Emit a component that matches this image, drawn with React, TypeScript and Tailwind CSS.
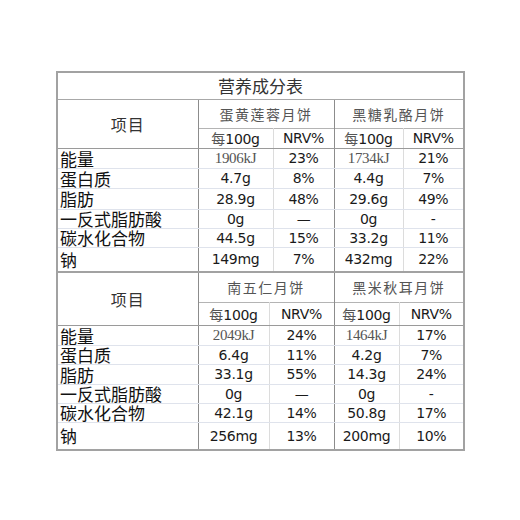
import type { ReactNode } from "react";

const cjk = "font-['Noto_Sans_CJK_SC',sans-serif]";
const num = "font-['DejaVu_Sans',sans-serif] text-[14px] text-[#1a1a1a] tracking-[-0.3px]";
const serifNum = "font-['Liberation_Serif',serif] text-[15px] text-[#555]";

type Row = {
	label: string;
	h: string;
	a: ReactNode;
	b: ReactNode;
	c: ReactNode;
	d: ReactNode;
	last?: boolean;
};

const top: Row[] = [
	{ label: "能量", h: "h-[20px]", a: <span className={serifNum}>1906kJ</span>, b: "23%", c: <span className={serifNum}>1734kJ</span>, d: "21%" },
	{ label: "蛋白质", h: "h-[20px]", a: "4.7g", b: "8%", c: "4.4g", d: "7%" },
	{ label: "脂肪", h: "h-[21px]", a: "28.9g", b: "48%", c: "29.6g", d: "49%" },
	{ label: "一反式脂肪酸", h: "h-[19px]", a: "0g", b: "—", c: "0g", d: "-" },
	{ label: "碳水化合物", h: "h-[19px]", a: "44.5g", b: "15%", c: "33.2g", d: "11%" },
	{ label: "钠", h: "h-[24px]", a: "149mg", b: "7%", c: "432mg", d: "22%", last: true },
];

const bottom: Row[] = [
	{ label: "能量", h: "h-[20px]", a: <span className={serifNum}>2049kJ</span>, b: "24%", c: <span className={serifNum}>1464kJ</span>, d: "17%" },
	{ label: "蛋白质", h: "h-[19px]", a: "6.4g", b: "11%", c: "4.2g", d: "7%" },
	{ label: "脂肪", h: "h-[20px]", a: "33.1g", b: "55%", c: "14.3g", d: "24%" },
	{ label: "一反式脂肪酸", h: "h-[19px]", a: "0g", b: "—", c: "0g", d: "-" },
	{ label: "碳水化合物", h: "h-[19px]", a: "42.1g", b: "14%", c: "50.8g", d: "17%" },
	{ label: "钠", h: "h-[27px]", a: "256mg", b: "13%", c: "200mg", d: "10%", last: true },
];

function BodyRows({ rows }: { rows: Row[] }) {
	return (
		<>
			{rows.map((r) => {
				const line = r.last ? "" : "border-b border-[#dfe3ec]";
				return (
					<tr key={r.label} className={r.h}>
						<td className={`${line} border-r border-r-[#8c8c8c] pl-[2px] p-0 text-left text-[17px] leading-none text-[#111] ${cjk}`}>
							{r.label}
						</td>
						<td className={`${line} border-r border-r-[#dcdcdc] p-0 text-center leading-none ${num}`}>{r.a}</td>
						<td className={`${line} border-r border-r-[#8c8c8c] p-0 text-center leading-none ${num}`}>{r.b}</td>
						<td className={`${line} border-r border-r-[#dcdcdc] p-0 text-center leading-none ${num}`}>{r.c}</td>
						<td className={`${line} p-0 text-center leading-none ${num}`}>{r.d}</td>
					</tr>
				);
			})}
		</>
	);
}

function PerHead({ h }: { h: string }) {
	return (
		<tr className={h}>
			<td className="border-t border-t-[#b4b4b4] border-r border-r-[#dcdcdc] border-b border-b-[#9a9a9a] p-0 text-center leading-none">
				<span className={`${cjk} text-[14px] text-[#555]`}>每</span>
				<span className={num}>100g</span>
			</td>
			<td className={`border-t border-t-[#b4b4b4] border-r border-r-[#8c8c8c] border-b border-b-[#9a9a9a] p-0 text-center leading-none ${num}`}>NRV%</td>
			<td className="border-t border-t-[#b4b4b4] border-r border-r-[#dcdcdc] border-b border-b-[#9a9a9a] p-0 text-center leading-none">
				<span className={`${cjk} text-[14px] text-[#555]`}>每</span>
				<span className={num}>100g</span>
			</td>
			<td className={`border-t border-t-[#b4b4b4] border-b border-b-[#9a9a9a] p-0 text-center leading-none ${num}`}>NRV%</td>
		</tr>
	);
}

function Section({
	cols,
	names,
	title,
	rows,
	prodH,
	perH,
	itemTop,
}: {
	cols: number[];
	names: [string, string];
	title?: string;
	rows: Row[];
	prodH: string;
	perH: string;
	itemTop?: boolean;
}) {
	return (
		<table className="w-[405px] table-fixed border-collapse">
			<colgroup>
				{cols.map((w) => (
					<col key={w + Math.random()} style={{ width: w }} />
				))}
			</colgroup>
			<tbody>
				{title && (
					<tr className="h-[26px]">
						<td colSpan={5} className={`border-b border-b-[#a8a8a8] p-0 text-center text-[17px] leading-none text-[#333] ${cjk}`}>
							{title}
						</td>
					</tr>
				)}
				<tr className={prodH}>
					<td
						rowSpan={2}
						className={`border-r border-r-[#8c8c8c] border-b border-b-[#9a9a9a] p-0 text-center text-[16px] leading-none tracking-[1px] text-[#333] ${cjk} ${itemTop ? "pt-[2px]" : ""}`}
					>
						项目
					</td>
					<td colSpan={2} className={`border-r border-r-[#8c8c8c] p-0 text-center text-[14px] leading-none tracking-[1.5px] text-[#555] ${cjk}`}>
						{names[0]}
					</td>
					<td colSpan={2} className={`p-0 text-center text-[14px] leading-none tracking-[1.5px] text-[#555] ${cjk}`}>
						{names[1]}
					</td>
				</tr>
				<PerHead h={perH} />
				<BodyRows rows={rows} />
			</tbody>
		</table>
	);
}

export default function App() {
	return (
		<div className="h-[520px] w-[520px] bg-white pt-[71px] pl-[56px]">
			<div className="w-[409px] border-2 border-[#a2a2a2]">
				<Section
					cols={[140, 75, 61, 69, 60]}
					names={["蛋黄莲蓉月饼", "黑糖乳酪月饼"]}
					title="营养成分表"
					rows={top}
					prodH="h-[29px]"
					perH="h-[20px]"
				/>
				<div className="h-[2px] bg-[#a2a2a2]" />
				<Section
					cols={[140, 71, 65, 65, 64]}
					names={["南五仁月饼", "黑米秋耳月饼"]}
					rows={bottom}
					prodH="h-[29px]"
					perH="h-[23px]"
				/>
			</div>
		</div>
	);
}
